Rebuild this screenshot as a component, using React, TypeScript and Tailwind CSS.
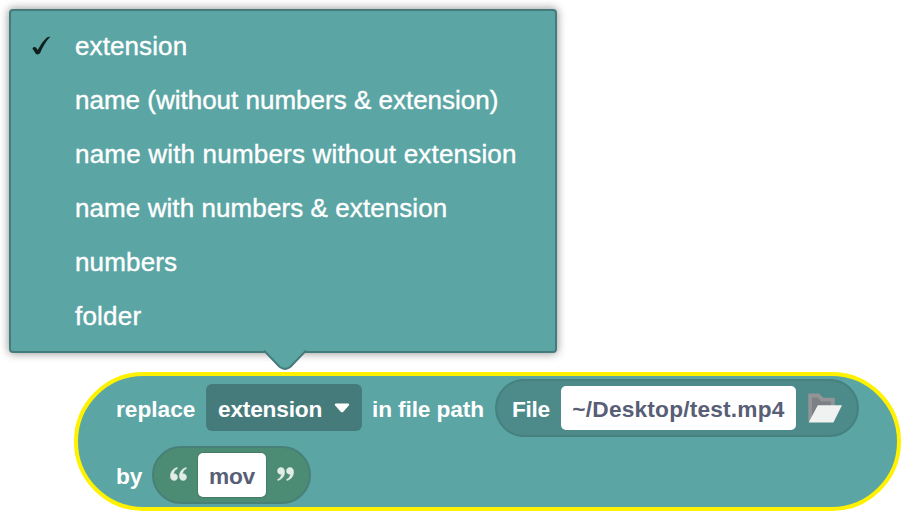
const OPTIONS = [
  { label: "extension", tracking: "tracking-[0.1px]" },
  { label: "name (without numbers & extension)", tracking: "tracking-normal" },
  { label: "name with numbers without extension", tracking: "tracking-[0.19px]" },
  { label: "name with numbers & extension", tracking: "tracking-[0.08px]" },
  { label: "numbers", tracking: "tracking-[0.15px]" },
  { label: "folder", tracking: "tracking-[0.2px]" },
];

function Check() {
  return (
    <svg className="h-[22px] w-[22px]" viewBox="0 0 22 22">
      <path
        d="M2.4 13.4C3.1 11.9 5 11.4 6 12.6L7.8 14.9C10 10.5 13.3 5.6 16.4 2.9C17.5 2 18.7 1.8 20.3 1.8C16 6.4 12.7 12 10.4 17.4C9.6 19.4 6.8 20 5.8 18.7C4.8 17.2 3.6 15 2.4 13.4Z"
        fill="#10201f"
      />
    </svg>
  );
}

function Menu() {
  return (
    <div className="relative h-[344px] w-[548px] rounded-[4px] border-2 border-[#457c7b] bg-[#5ba5a4] pt-[8px] shadow-[0_0_8px_1px_rgba(0,0,0,0.38)]">
      {OPTIONS.map((o, i) => (
        <div key={o.label} className="flex h-[54px] items-center">
          <div className="flex w-[64px] pl-[19px]">{i === 0 && <Check />}</div>
          <span
            className={`whitespace-nowrap text-[26px] leading-[54px] text-white [-webkit-text-stroke:0.4px_white] ${o.tracking}`}
          >
            {o.label}
          </span>
        </div>
      ))}
      <svg className="absolute left-[251px] top-[338px] h-[24px] w-[46px]" viewBox="0 0 46 24">
        <path d="M1 0V2L2 2L17.5 18Q23 22 28.5 18L44 2L45 2V0Z" fill="#5ba5a4" />
        <path d="M2 1.5L17.5 17.7Q23 22 28.5 17.7L44 1.5" fill="none" stroke="#457c7b" strokeWidth="2" />
      </svg>
    </div>
  );
}

function Folder() {
  return (
    <svg className="ml-[12px] h-[30px] w-[35px]" viewBox="0 0 35 30">
      <path d="M0.3 0.5H11L15.5 4.7H26.8V28H0.3Z" fill="#929497" />
      <path d="M4 4.5H9.5L13.5 8.5H23V28H4Z" fill="#7d8084" />
      <path d="M9.8 12.2H34L25.4 29.6H0.6Z" fill="#f0f2f2" />
    </svg>
  );
}

function Quote({ close = false }: { close?: boolean }) {
  return (
    <svg
      className={close ? "mb-[2px] h-[14px] w-[17px] rotate-180" : "mb-[2px] h-[14px] w-[17px]"}
      viewBox="0 0 17 14"
    >
      <g fill="#e1ede6" stroke="#e1ede6" strokeWidth="0.5">
        <path d="M7.1 0.5C3 1.7 0.4 5 0.4 9.1C0.4 11.8 1.8 13.5 4.1 13.5C6.1 13.5 7.5 12.1 7.5 10.1C7.5 8.1 6.1 6.8 4.2 6.8C3.7 6.8 3.6 6.9 3.5 7.1C3.8 4.5 4.9 2.8 7.4 1.5Z" />
        <path d="M16.1 0.5C12 1.7 9.4 5 9.4 9.1C9.4 11.8 10.8 13.5 13.1 13.5C15.1 13.5 16.5 12.1 16.5 10.1C16.5 8.1 15.1 6.8 13.2 6.8C12.7 6.8 12.6 6.9 12.5 7.1C12.8 4.5 13.9 2.8 16.4 1.5Z" />
      </g>
    </svg>
  );
}

function Block() {
  return (
    <div className="ml-[65px] mt-[19px] flex h-[139px] w-[827px] shrink-0 flex-col gap-[10px] rounded-full border-4 border-[#fff200] bg-[#5ba5a4] pl-[38px] pt-[3px] text-[22.7px] font-bold leading-none text-white whitespace-nowrap">
      <div className="flex h-[57px] shrink-0 items-center">
        <span className="w-[90px] pt-[3px]">replace</span>
        <div className="flex h-[47px] w-[156px] items-center justify-between rounded-[6px] bg-[#457c7b] pl-[12px] pr-[12px]">
          <span className="pt-[3px] tracking-[-0.2px]">extension</span>
          <svg className="h-[10px] w-[16px]" viewBox="0 0 16 10">
            <path d="M2 0.5H14Q16 1 14.8 2.6L9.3 8.7Q8 9.9 6.7 8.7L1.2 2.6Q0 1 2 0.5Z" fill="white" />
          </svg>
        </div>
        <span className="w-[133px] shrink-0 pl-[10px] pt-[3px] tracking-[-0.13px]">in file path</span>
        <div className="flex h-[58px] w-[364px] shrink-0 items-center rounded-full border-2 border-[#468180] bg-[#4c8b8a] pl-[15px]">
          <span className="w-[49px] pt-[3px] tracking-[-0.3px]">File</span>
          <div className="flex h-[44px] w-[235px] items-center justify-center rounded-[5px] bg-white pt-[3px] tracking-[0.2px] text-[#575e75]">
            ~/Desktop/test.mp4
          </div>
          <Folder />
        </div>
      </div>
      <div className="flex h-[58px] shrink-0 items-center">
        <span className="w-[36px] pt-[3px]">by</span>
        <div className="flex h-[58px] w-[159px] items-center rounded-full border-2 border-[#488078] bg-[#4d8c74] pl-[16px]">
          <Quote />
          <div className="mx-[11px] flex h-[44px] w-[68px] shrink-0 items-center justify-center rounded-[5px] bg-white pt-[3px] tracking-[-0.2px] text-[#575e75] shadow-[0_0_0_1px_#457c66]">
            mov
          </div>
          <Quote close />
        </div>
      </div>
    </div>
  );
}

export default function App() {
  return (
    <div className="flex h-[512px] w-[902px] flex-col overflow-hidden bg-white pl-[9px] pt-[9px] font-['Liberation_Sans',Arial,sans-serif]">
      <Menu />
      <Block />
    </div>
  );
}
